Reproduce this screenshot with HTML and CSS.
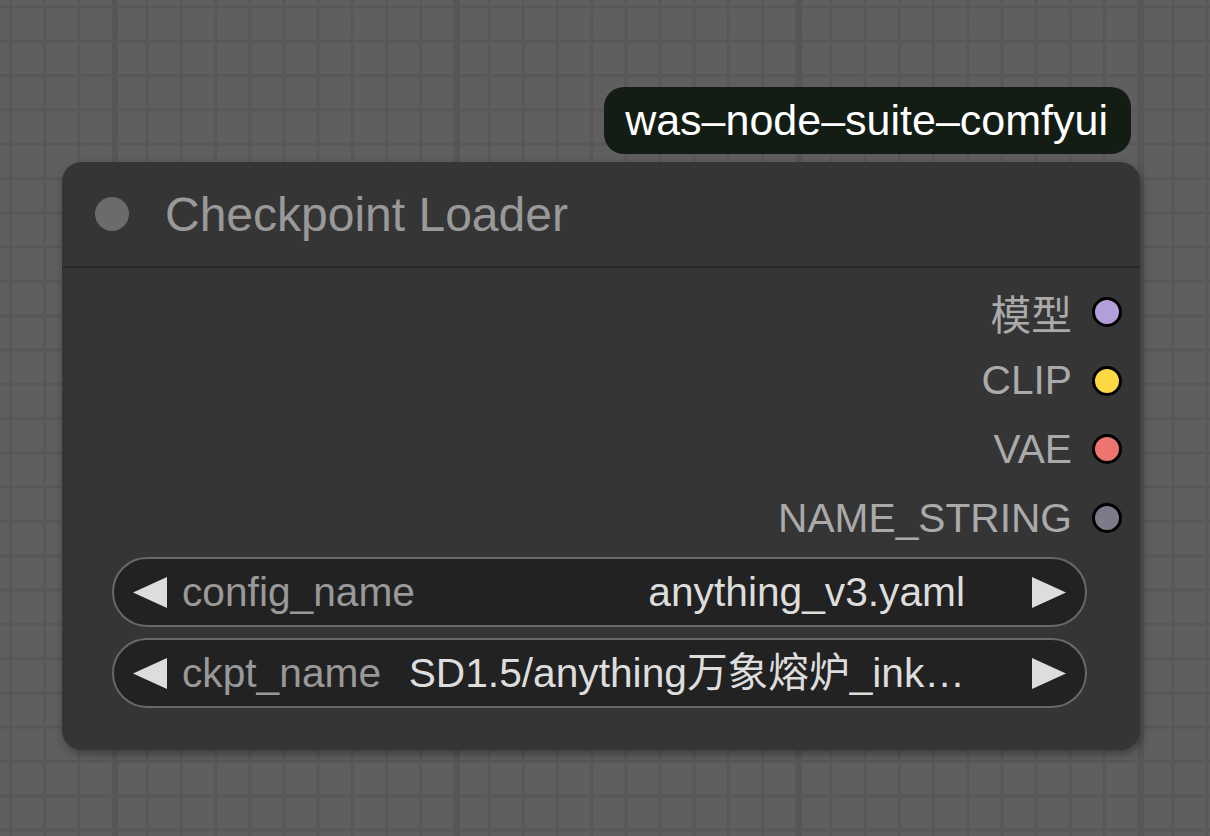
FILE: index.html
```html
<!DOCTYPE html>
<html lang="en">
<head>
<meta charset="utf-8">
<title>Checkpoint Loader</title>
<link rel="stylesheet" href="styles.css">
</head>
<body>
<div class="stage">
  <div class="column">
    <div class="badge">was–node–suite–comfyui</div>
    <div class="node">
      <div class="node-title">
        <span class="title-dot"></span>
        <span class="title-text">Checkpoint Loader</span>
      </div>
      <div class="node-body">
        <div class="outputs">
          <div class="out-row"><span class="out-label">模型</span><span class="slot slot-model"></span></div>
          <div class="out-row"><span class="out-label">CLIP</span><span class="slot slot-clip"></span></div>
          <div class="out-row"><span class="out-label">VAE</span><span class="slot slot-vae"></span></div>
          <div class="out-row"><span class="out-label">NAME_STRING</span><span class="slot slot-name"></span></div>
        </div>
        <div class="widgets">
          <div class="widget">
            <svg class="arrow" width="34" height="31" viewBox="0 0 34 31"><polygon points="34,0 0,15.5 34,31" fill="#dddddd"/></svg>
            <span class="w-label">config_name</span>
            <span class="w-value">anything_v3.yaml</span>
            <svg class="arrow" width="34" height="31" viewBox="0 0 34 31"><polygon points="0,0 34,15.5 0,31" fill="#dddddd"/></svg>
          </div>
          <div class="widget">
            <svg class="arrow" width="34" height="31" viewBox="0 0 34 31"><polygon points="34,0 0,15.5 34,31" fill="#dddddd"/></svg>
            <span class="w-label">ckpt_name</span>
            <span class="w-value">SD1.5/anything万象熔炉_ink…</span>
            <svg class="arrow" width="34" height="31" viewBox="0 0 34 31"><polygon points="0,0 34,15.5 0,31" fill="#dddddd"/></svg>
          </div>
        </div>
      </div>
    </div>
  </div>
</div>
</body>
</html>
```

FILE: styles.css
```css
html, body {
  margin: 0;
  padding: 0;
}

body {
  width: 1210px;
  height: 836px;
  overflow: hidden;
  font-family: "Liberation Sans", "Noto Sans CJK SC", Arial, sans-serif;
  background-color: #5f5f5f;
  background-image:
    linear-gradient(90deg, #565656 0 6px, transparent 6px),
    linear-gradient(90deg, #585858 0 3px, transparent 3px),
    linear-gradient(180deg, #585858 0 3px, transparent 3px);
  background-size: 342px 100%, 34.2px 100%, 100% 34.3px;
  background-position: 112px 0, 9px 0, 0 5.5px;
}

.stage {
  box-sizing: border-box;
  width: 1210px;
  height: 836px;
  padding: 87px 0 0 62px;
}

.column {
  width: 1078px;
  display: flex;
  flex-direction: column;
  gap: 8px;
}

.badge {
  align-self: flex-end;
  margin-right: 9px;
  height: 67px;
  box-sizing: border-box;
  padding: 0 23px 0 21px;
  display: flex;
  align-items: center;
  background: #141d13;
  color: #ffffff;
  border-radius: 20px;
  font-size: 43px;
  white-space: nowrap;
}

.node {
  background: #353535;
  border-radius: 20px;
  box-shadow: 2px 4px 10px rgba(0, 0, 0, 0.35);
}

.node-title {
  height: 104px;
  display: flex;
  align-items: center;
  padding-left: 33px;
  gap: 36px;
  border-bottom: 2px solid #292929;
}

.title-dot {
  width: 34px;
  height: 34px;
  border-radius: 50%;
  background: #6b6b6b;
  flex: none;
}

.title-text {
  font-size: 48px;
  color: #999999;
  white-space: nowrap;
}

.node-body {
  padding: 10px 0 42px;
}

.outputs {
  display: flex;
  flex-direction: column;
}

.out-row {
  height: 68.6px;
  display: flex;
  align-items: center;
  justify-content: flex-end;
  padding-right: 18px;
  gap: 20px;
}

.out-label {
  font-size: 40.7px;
  color: #aaaaaa;
  white-space: nowrap;
}

.slot {
  width: 24px;
  height: 24px;
  border: 3px solid #000000;
  border-radius: 50%;
  flex: none;
}

.slot-model { background: #b39ddb; }
.slot-clip { background: #fcd844; }
.slot-vae { background: #ee7470; }
.slot-name { background: #7c7b8a; }

.widgets {
  margin-top: 5px;
  padding: 0 53px 0 50px;
  display: flex;
  flex-direction: column;
  gap: 11px;
}

.widget {
  height: 70px;
  box-sizing: border-box;
  border: 2px solid #686868;
  border-radius: 35px;
  background: #222222;
  display: flex;
  align-items: center;
  padding: 0 19px;
}

.arrow {
  flex: none;
  display: block;
}

.w-label {
  margin-left: 15px;
  font-size: 40.7px;
  color: #999999;
  white-space: nowrap;
  flex: none;
}

.w-value {
  flex: 1;
  min-width: 0;
  margin: 0 67px 0 26px;
  font-size: 40.7px;
  line-height: 1.15;
  color: #dddddd;
  text-align: right;
  white-space: nowrap;
}
```
